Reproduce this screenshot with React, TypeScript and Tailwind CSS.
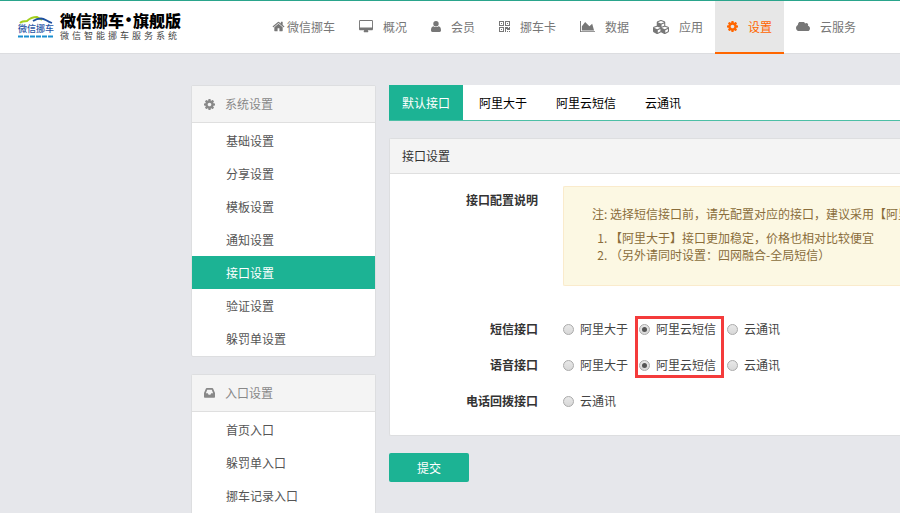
import { useState } from 'react'
import type { ReactNode } from 'react'
import clsx from 'clsx'
import { FaCubes } from 'react-icons/fa'

interface IconProps {
  className?: string
}

function HomeIcon({ className }: IconProps) {
  return (
    <svg viewBox="0 0 1792 1792" fill="currentColor" className={className} aria-hidden="true">
      <path d="M1472 992v480q0 26-19 45t-45 19h-384v-384h-256v384h-384q-26 0-45-19t-19-45v-480q0-1 .5-3t.5-3l575-474 575 474q1 2 1 6zm223-69l-62 74q-8 9-21 11h-3q-13 0-21-7l-692-577-692 577q-12 8-24 7-13-2-21-11l-62-74q-8-10-7-23.500t11-21.500l719-599q32-26 76-26t76 26l244 204v-195q0-14 9-23t23-9h192q14 0 23 9t9 23v408l219 182q10 8 11 21.500t-7 23.500z" />
    </svg>
  )
}

function DesktopIcon({ className }: IconProps) {
  return (
    <svg viewBox="-64 0 1920 1792" fill="currentColor" className={className} aria-hidden="true">
      <path d="M1728 992v-832q0-13-9.500-22.500t-22.500-9.500h-1600q-13 0-22.500 9.500t-9.500 22.500v832q0 13 9.500 22.500t22.500 9.500h1600q13 0 22.500-9.500t9.500-22.500zm128-832v1088q0 66-47 113t-113 47h-544q0 37 16 77.500t32 71 16 43.500q0 26-19 45t-45 19h-512q-26 0-45-19t-19-45q0-14 16-44t32-70 16-78h-544q-66 0-113-47t-47-113v-1088q0-66 47-113t113-47h1600q66 0 113 47t47 113z" />
    </svg>
  )
}

function UserIcon({ className }: IconProps) {
  return (
    <svg viewBox="0 0 10 11" fill="currentColor" className={className} aria-hidden="true">
      <circle cx="5" cy="2.800" r="2.700" />
      <path d="M2.400 5.200C3.900 6.400 6.100 6.400 7.600 5.200C9.300 5.400 10 7 10 9.300C10 10.300 9.500 11 8.600 11H1.400C.5 11 0 10.300 0 9.300C0 7 .7 5.400 2.400 5.200z" />
    </svg>
  )
}

function QrcodeIcon({ className }: IconProps) {
  return (
    <svg viewBox="0 0 11 11" fill="currentColor" className={className} aria-hidden="true">
      <path
        fillRule="evenodd"
        d="M0 0h5v5H0zM1 1v3h3V1zM6 0h5v5H6zM7 1v3h3V1zM0 6h5v5H0zM1 7v3h3V7zM2 2h1v1H2zM8 2h1v1H8zM2 8h1v1H2zM6 6h3v1h1V6h1v3H8V8H7v3H6zM8 10h1v1H8zM10 10h1v1h-1z"
      />
    </svg>
  )
}

function AreaChartIcon({ className }: IconProps) {
  return (
    <svg viewBox="0 128 2048 1536" fill="currentColor" className={className} aria-hidden="true">
      <path d="M2048 1536v128h-2048v-1536h128v1408h1920zm-384-1024l256 896h-1664v-576l448-576 576 576z" />
    </svg>
  )
}

function CogIcon({ className }: IconProps) {
  return (
    <svg viewBox="128 128 1536 1536" fill="currentColor" className={className} aria-hidden="true">
      <path d="M1152 896q0-106-75-181t-181-75-181 75-75 181 75 181 181 75 181-75 75-181zm512-109v222q0 12-8 23t-20 13l-185 28q-19 54-39 91 35 50 107 138 10 12 10 25t-9 23q-27 37-99 108t-94 71q-12 0-26-9l-138-108q-44 23-91 38-16 136-29 186-7 28-36 28h-222q-14 0-24.500-8.500t-11.500-21.500l-28-184q-49-16-90-37l-141 107q-10 9-25 9-14 0-25-11-126-114-165-168-7-10-7-23 0-12 8-23 15-21 51-66.500t54-70.500q-27-50-41-99l-183-27q-13-2-21-12.500t-8-23.500v-222q0-12 8-23t19-13l186-28q14-46 39-92-40-57-107-138-10-12-10-24 0-10 9-23 26-36 98.500-107.500t94.500-71.500q13 0 26 10l138 107q44-23 91-38 16-136 29-186 7-28 36-28h222q14 0 24.500 8.500t11.500 21.500l28 184q49 16 90 37l142-107q9-9 24-9 13 0 25 10 129 119 165 170 7 8 7 22 0 12-8 23-15 21-51 66.500t-54 70.500q26 50 41 98l183 28q13 2 21 12.500t8 23.500z" />
    </svg>
  )
}

function CloudIcon({ className }: IconProps) {
  return (
    <svg viewBox="64 256 1920 1280" fill="currentColor" className={className} aria-hidden="true">
      <path d="M1984 1152q0 159-112.500 271.500t-271.500 112.500h-1088q-185 0-316.500-131.500t-131.500-316.500q0-132 71-241.500t187-163.500q-2-28-2-43 0-212 150-362t362-150q158 0 286.500 88t187.500 230q70-62 166-62 106 0 181 75t75 181q0 75-41 138 129 30 213 134.500t84 239.500z" />
    </svg>
  )
}

function InboxIcon({ className }: IconProps) {
  return (
    <svg viewBox="0 0 11 10" fill="currentColor" className={className} aria-hidden="true">
      <path
        fillRule="evenodd"
        d="M2.800 0h5.400Q8.900 0 9.200.7L11 5v4q0 .8-.8.8H.8Q0 9.800 0 9V5L1.800.7Q2.100 0 2.800 0zM3.200 1.700L1.900 5.300h1.900l.8 1.500h1.800l.8-1.500h1.900L7.800 1.700z"
      />
    </svg>
  )
}

function Logo() {
  return (
    <a href="#home" className="flex w-[261px] shrink-0 items-center gap-1.5 pl-[18px]">
      <span className="flex w-9 flex-col items-center">
        <svg viewBox="0 0 36 8" className="h-2 w-9" fill="none" aria-hidden="true">
          <path d="M2 7C4 5 6 5 9 5C12 2 15 1 19 1L24 4" stroke="#a4cf1d" strokeWidth="1.800" />
          <path d="M15 5C18 3 20 2.500 23 2.500C27 2.500 28 5 34 7" stroke="#1d4fa0" strokeWidth="1.800" />
        </svg>
        <span className="text-[9px] leading-[10px] font-medium whitespace-nowrap text-[#2a56a5]">微信挪车</span>
        <svg viewBox="0 0 36 3" className="mt-px h-[3px] w-9" aria-hidden="true">
          <path d="M0 1.500H36" stroke="#1b8fd0" strokeWidth="2" strokeDasharray="5 1" />
        </svg>
      </span>
      <span className="flex flex-col">
        <span className="flex text-[16px] leading-[18px] font-black text-black">
          微信挪车<span className="w-[9px] text-center font-['Liberation_Sans']">•</span>旗舰版
        </span>
        <span className="text-[9px] leading-[14px] tracking-[3px] whitespace-nowrap text-[#444]">微信智能挪车服务系统</span>
      </span>
    </a>
  )
}

const NAV_ITEMS = [
  { label: '概况', icon: <DesktopIcon className="w-3.5" /> },
  { label: '会员', icon: <UserIcon className="w-2.5" /> },
  { label: '挪车卡', icon: <QrcodeIcon className="w-[11px]" /> },
  { label: '数据', icon: <AreaChartIcon className="w-[15px]" /> },
  { label: '应用', icon: <FaCubes className="size-4" /> },
  { label: '设置', icon: <CogIcon className="w-[11px]" />, active: true },
  { label: '云服务', icon: <CloudIcon className="w-3.5" /> },
]

function TopBar() {
  return (
    <header className="flex h-[54px] border-t border-b border-t-[#2aa58c] border-b-[#dcdde0] bg-white text-[#777]">
      <Logo />
      <nav className="-mb-px flex shrink-0 whitespace-nowrap">
        <a href="#home" className="flex items-center gap-0.5 border-b-2 border-transparent pr-3 pl-[11px]">
          <HomeIcon className="w-[13px]" />
          微信挪车
        </a>
        {NAV_ITEMS.map((item) => (
          <a
            key={item.label}
            href={`#${item.label}`}
            className={clsx(
              'flex items-center gap-2.5 border-b-2 px-3',
              item.active ? 'border-[#ff6600] bg-[#e7e7e7] text-[#ff6600]' : 'border-transparent',
            )}
          >
            {item.icon}
            {item.label}
          </a>
        ))}
      </nav>
    </header>
  )
}

interface MenuPanelProps {
  title: string
  icon: ReactNode
  items: string[]
  current?: string
  className?: string
}

function MenuPanel({ title, icon, items, current, className }: MenuPanelProps) {
  return (
    <section className={clsx('rounded-xs border border-[#dddee0] bg-white', className)}>
      <h2 className="flex h-[37px] items-center gap-2.5 border-b border-[#dfdfdf] bg-[#f4f4f4] px-3 text-[#888]">
        {icon}
        {title}
      </h2>
      <ul className="py-px">
        {items.map((item) => (
          <li key={item}>
            <a
              href={`#${item}`}
              className={clsx(
                'flex h-[33px] items-center pl-[34px]',
                item === current ? 'bg-[#1cb394] text-white' : 'text-[#555]',
              )}
            >
              {item}
            </a>
          </li>
        ))}
      </ul>
    </section>
  )
}

interface RadioRowProps {
  label: string
  name: string
  options: string[]
  initial?: string
  marked?: string
}

function RadioRow({ label, name, options, initial = '', marked }: RadioRowProps) {
  const [value, setValue] = useState(initial)

  return (
    <fieldset className="flex h-9 items-center" aria-label={label}>
      <span className="w-[148px] shrink-0 text-right font-bold text-[#333]">{label}</span>
      <div className="flex gap-[11px] pl-[25px] text-[#444]">
        {options.map((option) => (
          <label key={option} className="relative flex items-center gap-1.5 whitespace-nowrap">
            <input
              type="radio"
              name={name}
              value={option}
              checked={value === option}
              onChange={() => setValue(option)}
              className="flex size-[11px] appearance-none items-center justify-center rounded-full border border-[#aaa] bg-linear-to-b from-[#e8e8e8] to-[#d8d8d8] checked:before:size-[5px] checked:before:rounded-full checked:before:bg-[#555] checked:before:content-['']"
            />
            {option}
            {option === marked ? (
              <span className="pointer-events-none absolute -top-1 -right-2 -left-1 h-[62px] border-3 border-[#f43b3b]" />
            ) : null}
          </label>
        ))}
      </div>
    </fieldset>
  )
}

const TABS = ['默认接口', '阿里大于', '阿里云短信', '云通讯']
const PROVIDERS = ['阿里大于', '阿里云短信', '云通讯']

export default function App() {
  const [tab, setTab] = useState(TABS[0])

  return (
    <div className="flex min-h-screen flex-col overflow-x-hidden bg-[#e6e7eb] font-['Noto_Sans_CJK_SC',sans-serif] text-[12px] leading-[18px]">
      <TopBar />
      <div className="flex grow gap-[13px] pt-[31px] pl-[191px]">
        <aside className="flex w-[185px] shrink-0 flex-col gap-[17px]">
          <MenuPanel
            title="系统设置"
            icon={<CogIcon className="w-[11px]" />}
            items={['基础设置', '分享设置', '模板设置', '通知设置', '接口设置', '验证设置', '躲罚单设置']}
            current="接口设置"
          />
          <MenuPanel
            title="入口设置"
            icon={<InboxIcon className="w-[11px]" />}
            items={['首页入口', '躲罚单入口', '挪车记录入口']}
            className="grow rounded-b-none border-b-0"
          />
        </aside>

        <main className="min-w-0 grow">
          <div className="flex h-9 gap-[3px] border-b border-[#4dbfa6] bg-white" role="tablist">
            {TABS.map((item) => (
              <button
                key={item}
                type="button"
                role="tab"
                aria-selected={item === tab}
                onClick={() => setTab(item)}
                className={clsx('px-[13px]', item === tab ? 'bg-[#1cb394] text-white' : 'text-black')}
              >
                {item}
              </button>
            ))}
          </div>

          <form onSubmit={(event) => event.preventDefault()}>
            <section className="mt-[17px] rounded-l-xs border border-r-0 border-[#dddee0] bg-white pb-4">
              <h1 className="flex h-[35px] items-center border-b border-[#dfdfdf] bg-[#f4f4f4] px-3 text-[#333]">
                接口设置
              </h1>
              <div className="flex pt-3">
                <span className="w-[148px] shrink-0 pt-[5px] text-right font-bold text-[#333]">接口配置说明</span>
                <div className="ml-[25px] h-[100px] min-w-0 grow overflow-hidden rounded-l-xs border border-r-0 border-[#faebcc] bg-[#fcf8e3] pt-[18px] pl-7 whitespace-nowrap text-[#8a6d3b]">
                  <p>注: 选择短信接口前，请先配置对应的接口，建议采用【阿里大于】接口</p>
                  <ol className="mt-1.5 list-decimal pl-[18px] leading-[17px]">
                    <li>【阿里大于】接口更加稳定，价格也相对比较便宜</li>
                    <li>（另外请同时设置：四网融合-全局短信）</li>
                  </ol>
                </div>
              </div>
              <div className="mt-[25px]">
                <RadioRow label="短信接口" name="sms" options={PROVIDERS} initial="阿里云短信" marked="阿里云短信" />
                <RadioRow label="语音接口" name="voice" options={PROVIDERS} initial="阿里云短信" />
                <RadioRow label="电话回拨接口" name="callback" options={['云通讯']} />
              </div>
            </section>
            <button type="submit" className="mt-[17px] h-[29px] rounded-xs bg-[#1cb394] px-7 text-white">
              提交
            </button>
          </form>
        </main>
      </div>
    </div>
  )
}
